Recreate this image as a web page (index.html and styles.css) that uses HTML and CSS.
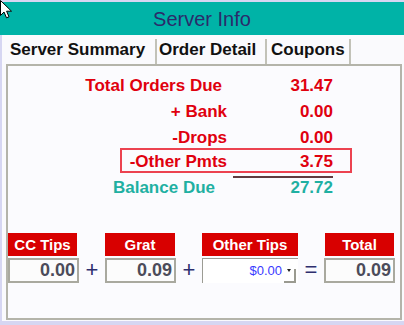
FILE: index.html
```html
<!DOCTYPE html>
<html lang="en">
<head>
  <meta charset="UTF-8" />
  <title>Server Info</title>
  <link rel="stylesheet" href="styles.css">
</head>
<body>
  <svg class="cursor" width="13" height="19" viewBox="0 0 13 19">
    <path d="M0.5 0.5 L0.5 15.5 L4 12 L6.5 17.8 L9 16.8 L6.6 11.2 L11.5 11.2 Z" fill="#fff" stroke="#000" stroke-width="1" />
  </svg>

  <header class="titlebar">Server Info</header>

  <div class="window">
    <nav class="tabs">
      <span class="tab tab-summary">Server Summary</span>
      <span class="tab tab-orders">Order Detail</span>
      <span class="tab tab-coupons">Coupons</span>
    </nav>

    <section class="panel">
      <div class="summary">
        <div class="row"><span class="label label-first">Total Orders Due</span><span class="value">31.47</span></div>
        <div class="row"><span class="label">+ Bank</span><span class="value">0.00</span></div>
        <div class="row"><span class="label">-Drops</span><span class="value">0.00</span></div>
        <div class="row row-hl"><span class="label">-Other Pmts</span><span class="value">3.75</span></div>
        <div class="row row-balance"><span class="label">Balance Due</span><span class="value">27.72</span></div>
      </div>

      <div class="tips">
        <div class="tip tip-cc">
          <div class="tip-head">CC Tips</div>
          <div class="tip-box">0.00</div>
        </div>
        <span class="op">+</span>
        <div class="tip tip-grat">
          <div class="tip-head">Grat</div>
          <div class="tip-box">0.09</div>
        </div>
        <span class="op">+</span>
        <div class="tip tip-other">
          <div class="tip-head">Other Tips</div>
          <div class="tip-box select">
            <span class="sel-val">$0.00</span>
            <span class="sel-btn"></span>
          </div>
        </div>
        <span class="op">=</span>
        <div class="tip tip-total">
          <div class="tip-head">Total</div>
          <div class="tip-box">0.09</div>
        </div>
      </div>
    </section>
  </div>
</body>
</html>
```

FILE: styles.css
```css
body, html {
  margin: 0;
  padding: 0;
}
body {
  background: #d6d6f2;
  font-family: "Liberation Sans", Arial, sans-serif;
  padding-top: 2px;
  height: 325px;
  box-sizing: border-box;
  overflow: hidden;
  position: relative;
}
.cursor {
  position: absolute;
  top: 0;
  left: 0;
  z-index: 10;
}
.titlebar {
  height: 32px;
  padding-top: 1px;
  background: #00b3a7;
  color: #2b2b6b;
  font-size: 20px;
  line-height: 33px;
  text-align: center;
}
.window {
  margin-left: 2px;
  height: 286px;
  background: #fafafd;
}

/* tabs */
.tabs {
  display: flex;
  height: 29px;
  align-items: flex-end;
}
.tab {
  box-sizing: border-box;
  height: 25px;
  padding-bottom: 2px;
  line-height: 22px;
  font-size: 17px;
  font-weight: bold;
  color: #111;
  border-right: 2px solid #c2c2b8;
  white-space: nowrap;
}
.tab-summary { width: 155px; padding-left: 8px; }
.tab-orders { width: 110px; padding-left: 2px; }
.tab-coupons { width: 84px; padding-left: 4px; }

/* panel */
.panel {
  box-sizing: border-box;
  margin-left: 4px;
  width: 396px;
  height: 256px;
  border: 2px solid #b4b4aa;
  background: #fbfbfe;
}
.summary {
  padding-top: 7px;
}
.row {
  display: flex;
  height: 26px;
  line-height: 26px;
  font-size: 17px;
  font-weight: bold;
  color: #e0000e;
  position: relative;
}
.label {
  width: 219px;
  text-align: right;
  white-space: nowrap;
}
.label-first {
  padding-right: 5px;
  width: 214px;
}
.value {
  width: 106px;
  text-align: right;
}
.row-hl {
  margin-top: -2px;
}
.row-hl::before {
  content: "";
  position: absolute;
  left: 112px;
  top: -1px;
  width: 232px;
  height: 25px;
  box-sizing: border-box;
  border: 2px solid #ec4250;
}
.row-hl::after {
  content: "";
  position: absolute;
  left: 225px;
  top: 27px;
  width: 100px;
  height: 2px;
  background: #5e3c40;
}
.row-balance {
  color: #1fb0a2;
}
.row-balance .label {
  width: 207px;
  padding-right: 12px;
}

/* tips */
.tips {
  display: flex;
  align-items: flex-start;
  margin-top: 32px;
}
.tip-head {
  height: 23px;
  line-height: 23px;
  margin-bottom: 2px;
  background: #d80000;
  color: #fff;
  font-size: 15px;
  font-weight: bold;
  text-align: center;
}
.tip-box {
  box-sizing: border-box;
  height: 25px;
  border: 2px solid #a9a99f;
  background: #fcfcfc;
  text-align: right;
  padding-right: 2px;
  font-size: 18px;
  font-weight: bold;
  line-height: 20px;
  color: #4c4c5a;
}
.tip-cc, .tip-grat, .tip-total { width: 71px; }
.tip-cc .tip-head { width: 69px; }
.tip-grat .tip-head { width: 70px; }
.tip-total .tip-head { width: 69px; margin-left: 1px; }
.tip-other { width: 96px; }

.op {
  width: 26px;
  margin-top: 25px;
  height: 25px;
  line-height: 23px;
  text-align: center;
  font-size: 22px;
  color: #2e2e6e;
}

.select {
  display: flex;
  justify-content: flex-end;
  align-items: flex-start;
  border: none;
  border-top: 1px solid #9c9c94;
  border-left: 1px solid #9c9c94;
  background: #fff;
  padding-right: 2px;
}
.sel-val {
  font-size: 13px;
  font-weight: normal;
  color: #3a3aff;
  line-height: 13px;
  margin-top: 5px;
  margin-right: 2px;
}
.sel-btn {
  position: relative;
  box-sizing: border-box;
  width: 12px;
  height: 14px;
  margin-top: 10px;
  border-right: 2px solid #9a9a90;
  border-bottom: 2px solid #9a9a90;
}
.sel-btn::before {
  content: "";
  position: absolute;
  left: 3px;
  top: 0;
  border-left: 2px solid transparent;
  border-right: 2px solid transparent;
  border-top: 3px solid #222;
}
```
